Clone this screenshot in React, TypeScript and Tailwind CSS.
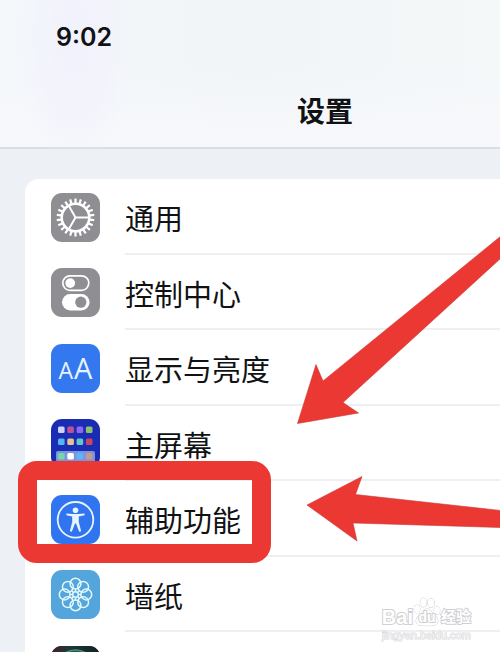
import type { ReactNode } from "react";

function GearIcon() {
  const teeth = Array.from({ length: 22 }, (_, i) => (i * 360) / 22);
  return (
    <svg viewBox="0 0 49 49" className="size-full" aria-hidden="true">
      <g stroke="#fff" fill="none">
        {teeth.map((angle) => (
          <line key={angle} x1="24.5" y1="5.6" x2="24.5" y2="10" strokeWidth="2.2" transform={`rotate(${angle} 24.5 24.5)`} />
        ))}
        <circle cx="24.5" cy="24.5" r="13.8" strokeWidth="2.6" />
        {[0, 120, 240].map((angle) => (
          <line key={angle} x1="24.5" y1="24.5" x2="38" y2="24.5" strokeWidth="2" transform={`rotate(${angle} 24.5 24.5)`} />
        ))}
      </g>
    </svg>
  );
}

function TogglesIcon() {
  return (
    <svg viewBox="0 0 49 49" className="size-full" aria-hidden="true">
      <rect x="11.8" y="7.8" width="26" height="14.6" rx="7.3" fill="none" stroke="#fff" strokeWidth="1.7" />
      <circle cx="19.2" cy="15.1" r="4.9" fill="#fff" />
      <rect x="11" y="26" width="27.6" height="16.4" rx="8.2" fill="#fff" />
      <circle cx="29.8" cy="34.2" r="5.6" fill="#8e8e93" />
    </svg>
  );
}

function HomeScreenIcon() {
  const rows = [
    { y: 7.5, colors: ["#cfd3fb", "#c0528f", "#8d68f5", "#8fc26d"] },
    { y: 19.5, colors: ["#56b4f4", "#e9c48a", "#65c6c8", "#cb4560"] },
    { y: 34, colors: ["#73d8a8", "#ffffff", "#58b9f6", "#c49b8c"] },
  ];
  return (
    <svg viewBox="0 0 49 49" className="size-full" aria-hidden="true">
      <rect x="5" y="32" width="39" height="11" rx="2" fill="#7d93de" />
      {rows.map((row) =>
        row.colors.map((color, i) => (
          <rect key={color} x={7 + i * 9.3} y={row.y} width="6.6" height="6.6" rx="1.5" fill={color} />
        )),
      )}
    </svg>
  );
}

function AccessibilityIcon() {
  return (
    <svg viewBox="0 0 49 49" className="size-full" aria-hidden="true">
      <circle cx="24.5" cy="24.8" r="17.8" fill="none" stroke="#e6f4ff" strokeWidth="1.8" />
      <circle cx="24.5" cy="15.2" r="2.8" fill="#e6f4ff" />
      <path
        d="M15.4 18.4 L22 19 H27 L33.6 18.4 V20.2 L27.8 21.6 V27 L30.2 36.2 L28.2 36.8 L25 28.6 H24 L20.8 36.8 L18.8 36.2 L21.2 27 V21.6 L15.4 20.2 Z"
        fill="#e6f4ff"
      />
    </svg>
  );
}

function FlowerIcon() {
  return (
    <svg viewBox="0 0 49 49" className="size-full" aria-hidden="true">
      <g fill="none" stroke="#e2f8fb" strokeWidth="1.5">
        {Array.from({ length: 8 }, (_, i) => i * 45).map((angle) => (
          <circle key={angle} cx="24.5" cy="13.7" r="5.4" transform={`rotate(${angle} 24.5 24.5)`} />
        ))}
        {Array.from({ length: 8 }, (_, i) => i * 45).map((angle) => (
          <line key={angle} x1="24.5" y1="22" x2="24.5" y2="18.5" transform={`rotate(${angle} 24.5 24.5)`} />
        ))}
        <circle cx="24.5" cy="24.5" r="2.8" />
      </g>
    </svg>
  );
}

function SiriIcon() {
  return (
    <svg viewBox="0 0 49 49" className="size-full" aria-hidden="true">
      <defs>
        <linearGradient id="siri-tile" x1="0" x2="1">
          <stop offset="0" stopColor="#4a1a30" />
          <stop offset="0.35" stopColor="#1d3a35" />
          <stop offset="1" stopColor="#12221f" />
        </linearGradient>
      </defs>
      <rect width="49" height="49" fill="url(#siri-tile)" />
      <circle cx="24.5" cy="23" r="19" fill="#1f5a4b" stroke="#4f8f80" strokeWidth="1.5" />
    </svg>
  );
}

function TextSizeIcon() {
  return (
    <span className="flex size-full items-baseline justify-center gap-px pt-2 font-['Open_Sans',sans-serif] leading-8 text-[#e6f4ff]">
      <span className="text-[23px]">A</span>
      <span className="text-[29px]">A</span>
    </span>
  );
}

type Item = { name: string; tile: string; icon: ReactNode; marked?: boolean; iconOnly?: boolean };

const items: Item[] = [
  { name: "通用", tile: "bg-[#8e8e93]", icon: <GearIcon /> },
  { name: "控制中心", tile: "bg-[#8e8e93]", icon: <TogglesIcon /> },
  { name: "显示与亮度", tile: "bg-[#3478f0]", icon: <TextSizeIcon /> },
  { name: "主屏幕", tile: "bg-[#1b2cb4]", icon: <HomeScreenIcon /> },
  { name: "辅助功能", tile: "bg-[#3074f0]", icon: <AccessibilityIcon />, marked: true },
  { name: "墙纸", tile: "bg-[#54a5dc]", icon: <FlowerIcon /> },
  { name: "Siri", tile: "bg-[#1d1a20]", icon: <SiriIcon />, iconOnly: true },
];

function Row({ name, tile, icon, marked, iconOnly }: Item) {
  return (
    <li className="relative odd:h-[76px] even:h-[75px]">
      <button type="button" aria-label={name} className="flex size-full items-center gap-[25px] pl-[26px] text-left">
        <span className={`size-[49px] shrink-0 overflow-hidden rounded-[11px] ${tile}`}>{icon}</span>
        <span className="flex h-full flex-1 items-center border-b-2 border-[#efeff1] pt-[7px] text-[29px] leading-none">
          {iconOnly ? null : name}
        </span>
      </button>
      {marked && (
        <span className="pointer-events-none absolute -top-5 -left-[7px] z-10 h-[102px] w-[253px] rounded-[19px] border-[19px] border-[#ec3832]" />
      )}
    </li>
  );
}

function Watermark() {
  return (
    <div className="absolute right-[29px] bottom-[9px] flex flex-col items-center font-['Liberation_Sans','Noto_Sans_CJK_SC',sans-serif] text-white [-webkit-text-stroke:1px_#d6d6d8]">
      <div className="flex items-end leading-5 font-bold [paint-order:stroke_fill] [-webkit-text-stroke:2px_#d0d0d3]">
        <span className="text-[20px]">Bai</span>
        <span className="relative flex h-[30px] w-7 items-end justify-center text-[14px] leading-5">
          <svg viewBox="0 0 28 30" className="absolute inset-0 size-full" fill="#fff" stroke="#c9c9cc" strokeWidth="1" aria-hidden="true">
            <ellipse cx="4" cy="12" rx="3" ry="4" />
            <ellipse cx="10.5" cy="5.5" rx="3.2" ry="4.4" />
            <ellipse cx="18" cy="6" rx="3.2" ry="4.4" />
            <ellipse cx="24" cy="13.5" rx="3" ry="4" />
            <path d="M14 12 C18 12 19 16 22.5 19 C26 22 26 28 20 28.5 C16 28.8 12 28.8 8 28.5 C2 28 2 22 5.5 19 C9 16 10 12 14 12 Z" />
          </svg>
          <span className="relative">du</span>
        </span>
        <span className="text-[15px]">经验</span>
      </div>
      <span className="text-[11px] leading-4 text-[#f4f4f5] [paint-order:stroke_fill]">jingyan.baidu.com</span>
    </div>
  );
}

export default function App() {
  return (
    <div className="relative h-screen overflow-hidden bg-[#edf0f5] font-['Inter','Noto_Sans_CJK_SC',sans-serif] text-[#111214]">
      <header className="border-b-2 border-[#dcdee2] bg-linear-to-r from-[#f4f8fb] via-[#f1f5f7] to-[#f4f8f9]">
        <div className="bg-[radial-gradient(ellipse_60px_130px_at_15%_25%,#f2f2fc_30%,transparent_100%),linear-gradient(to_bottom,transparent_40%,#f7f8fb)] pb-[15px]">
          <p className="pt-[21px] pl-[56px] text-[25px] leading-8 font-semibold">9:02</p>
          <h1 className="pt-[39px] pl-[30%] text-center text-[28px] leading-10 font-bold">设置</h1>
        </div>
      </header>

      <main className="pt-[30px] pl-[25px]">
        <ul className="rounded-tl-[14px] bg-white">
          {items.map((item) => (
            <Row key={item.name} {...item} />
          ))}
        </ul>
      </main>

      <svg viewBox="0 0 203 306" className="pointer-events-none absolute top-[236px] right-0 w-[203px]" fill="#ec3832" stroke="#c73a3a" strokeWidth="0.6" aria-hidden="true">
        <path d="M0.5 187.5 L19 128.5 L26 145 L204 0 V22 L46 166.5 L61.5 177 Z" />
        <path d="M10 269 L65 240.5 L58.5 258.5 L204 274.5 V291.5 L56 287 L60 305 Z" />
      </svg>

      <Watermark />
    </div>
  );
}
